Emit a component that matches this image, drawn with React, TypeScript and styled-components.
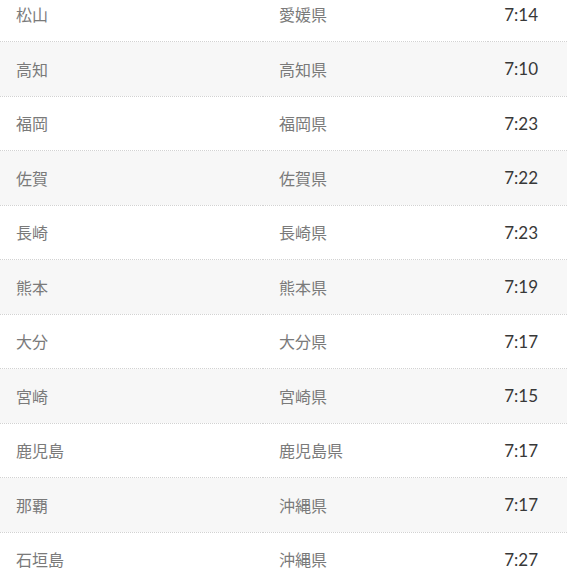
import styled, { createGlobalStyle } from 'styled-components';

const GlobalStyle = createGlobalStyle`
    html, body {
        margin: 0;
        padding: 0;
        background: #fff;
    }
    body {
        font-family: Lato, "Noto Sans CJK JP", sans-serif;
    }
`

const Table = styled.table`
    width: 100%;
    table-layout: fixed;
    border-collapse: collapse;
    margin-top: -13px;
`

const Row = styled.tr<{ $shaded: boolean }>`
    background: ${(p) => (p.$shaded ? '#f7f7f7' : '#fff')};
    border-bottom: 1px dotted #d2d2d2;
    height: 54.5px;
`

const Col = styled.col<{ $width: number }>`
    width: ${(p) => p.$width}px;
`

const Cell = styled.td`
    padding: 0 0 0 16px;
    font-size: 16px;
    color: #7a7a7a;
    vertical-align: middle;
    white-space: nowrap;
`

const TimeCell = styled.td`
    padding: 0 29px 0 0;
    text-align: right;
    font-size: 17px;
    color: #383838;
    vertical-align: middle;
`

const rows = [
    ['松山', '愛媛県', '7:14'],
    ['高知', '高知県', '7:10'],
    ['福岡', '福岡県', '7:23'],
    ['佐賀', '佐賀県', '7:22'],
    ['長崎', '長崎県', '7:23'],
    ['熊本', '熊本県', '7:19'],
    ['大分', '大分県', '7:17'],
    ['宮崎', '宮崎県', '7:15'],
    ['鹿児島', '鹿児島県', '7:17'],
    ['那覇', '沖縄県', '7:17'],
    ['石垣島', '沖縄県', '7:27'],
]

export default function App() {
    return (
        <>
            <GlobalStyle />
            <Table>
                <colgroup>
                    <Col $width={263} />
                    <Col $width={225} />
                    <Col $width={79} />
                </colgroup>
                <tbody>
                    {rows.map((r, i) => (
                        <Row key={i} $shaded={i % 2 === 1}>
                            <Cell>{r[0]}</Cell>
                            <Cell>{r[1]}</Cell>
                            <TimeCell>{r[2]}</TimeCell>
                        </Row>
                    ))}
                </tbody>
            </Table>
        </>
    )
}
